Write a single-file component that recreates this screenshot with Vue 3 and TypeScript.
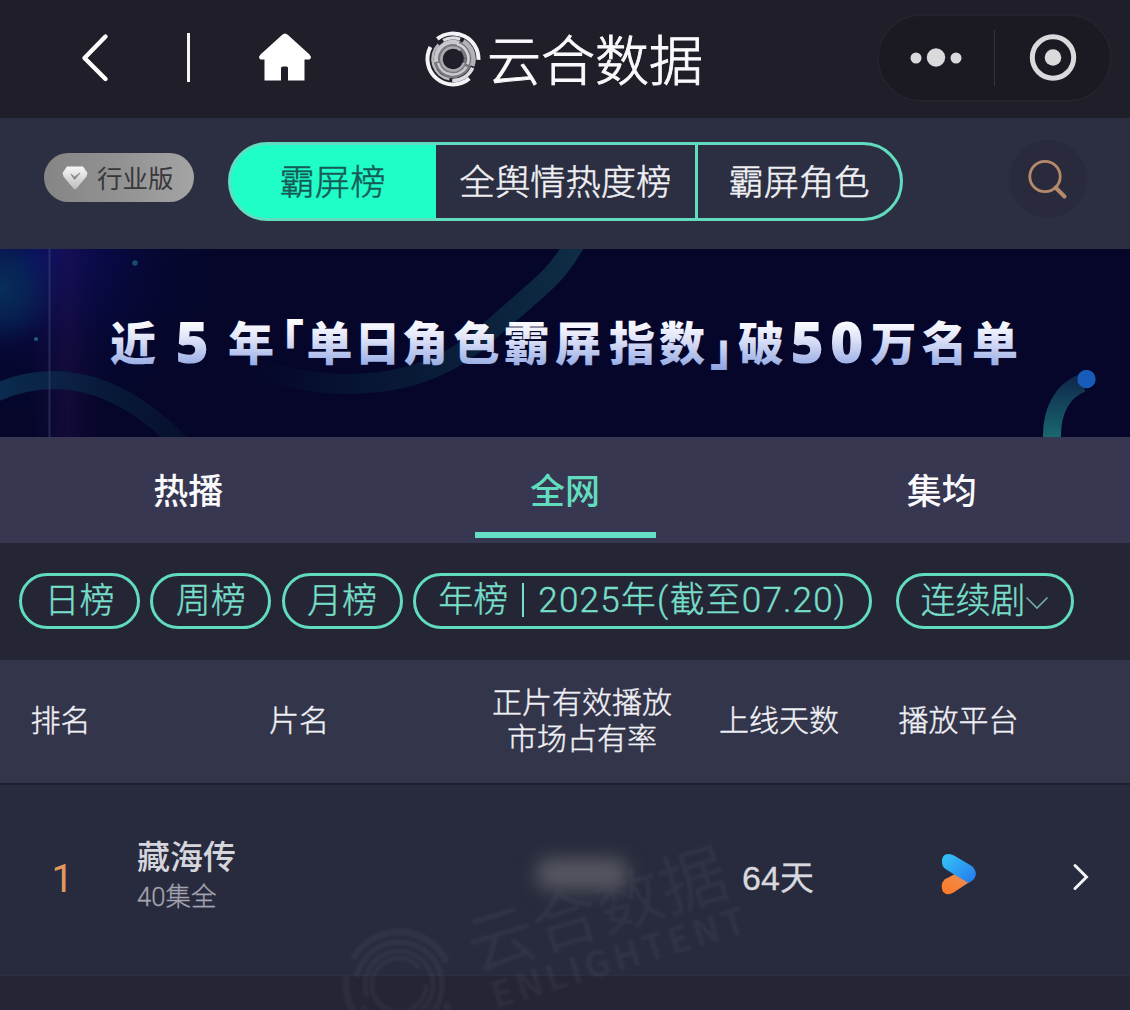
<script setup lang="ts">
interface Arc {
  r: number
  from: number
  to: number
  width: number
  color: string
}

const segments: string[] = ['霸屏榜', '全舆情热度榜', '霸屏角色']
const tabs: string[] = ['热播', '全网', '集均']
const periods: string[] = ['日榜', '周榜', '月榜']

const logoArcs: Arc[] = [
  { r: 15, from: 0, to: 359, width: 8.5, color: '#77777d' },
  { r: 25.5, from: -128, to: 2, width: 4, color: '#f4f4f6' },
  { r: 25.5, from: 50, to: 208, width: 4, color: '#f4f4f6' },
  { r: 21.5, from: 24, to: 92, width: 3.6, color: '#dedee2' },
  { r: 21, from: -118, to: -70, width: 3.2, color: '#dedee2' },
  { r: 20.5, from: 100, to: 225, width: 2.6, color: '#b9b9be' },
  { r: 20.5, from: -60, to: 20, width: 4.6, color: '#b1b1b6' },
  { r: 17, from: 170, to: 290, width: 4, color: '#c9c9cd' },
  { r: 15.5, from: 30, to: 165, width: 2.6, color: '#c8c8cd' },
  { r: 15.5, from: -75, to: 20, width: 2.6, color: '#d4d4d8' },
  { r: 11.5, from: 20, to: 310, width: 2.6, color: '#a9a9af' },
]

const markArcs: Arc[] = [
  { r: 53, from: -150, to: -25, width: 7, color: '#8b8bab' },
  { r: 53, from: 20, to: 190, width: 7, color: '#8b8bab' },
  { r: 43, from: -170, to: 150, width: 6, color: '#8b8bab' },
  { r: 34, from: -200, to: 60, width: 5, color: '#8b8bab' },
  { r: 27, from: 0, to: 320, width: 5, color: '#8b8bab' },
]

function arcPath(a: Arc): string {
  const rad = Math.PI / 180
  const x1 = a.r * Math.cos(a.from * rad)
  const y1 = a.r * Math.sin(a.from * rad)
  const x2 = a.r * Math.cos(a.to * rad)
  const y2 = a.r * Math.sin(a.to * rad)
  const large = a.to - a.from > 180 ? 1 : 0
  return `M${x1.toFixed(2)} ${y1.toFixed(2)}A${a.r} ${a.r} 0 ${large} 1 ${x2.toFixed(2)} ${y2.toFixed(2)}`
}
</script>

<template>
  <div class="page">
    <header class="topbar">
      <svg class="back" width="30" height="50" viewBox="0 0 30 50"><path d="M25.500 4 4.500 25.500 25.500 46.500" fill="none" stroke="#fff" stroke-width="4.400" stroke-linecap="round" stroke-linejoin="round" transform="translate(0 -.5)" /></svg>
      <i class="sep"></i>
      <svg class="home" width="54" height="50" viewBox="0 0 54 50"><path d="M27 1.500Q28.500 1.500 30 3L51.500 22.500Q53.500 24.500 52.500 26.500L51.500 27.500H46.500V48.500H30V36Q30 34.500 28.500 34.500H25Q23 34.500 23 36V48.500H6.500V27.500H2.500L1.500 26.500Q.5 24.500 2.500 22.500L24 3Q25.500 1.500 27 1.500Z" fill="#fff" /></svg>
      <div class="brand">
        <svg width="58" height="58" viewBox="-29 -29 58 58">
          <path v-for="(a, i) in logoArcs" :key="i" :d="arcPath(a)" fill="none" :stroke="a.color" :stroke-width="a.width" />
        </svg>
        <span>云合数据</span>
      </div>
      <div class="capsule">
        <svg class="dots" width="54" height="20" viewBox="0 0 54 20" fill="#dadadd"><circle cx="7" cy="10" r="5.500" /><circle cx="27" cy="9.500" r="9.200" /><circle cx="47" cy="10" r="5.500" /></svg>
        <i></i>
        <svg class="target" width="48" height="48" viewBox="0 0 48 48"><circle cx="24" cy="23.500" r="20.700" fill="none" stroke="#dadadd" stroke-width="5" /><circle cx="24" cy="23.500" r="8.300" fill="#dadadd" /></svg>
      </div>
    </header>

    <div class="subbar">
      <div class="edition">
        <svg width="26" height="24" viewBox="0 0 26 24">
          <defs><linearGradient id="gem" x1="0" y1="0" x2="0" y2="1"><stop offset="0" stop-color="#f8f8f8" /><stop offset="1" stop-color="#bdbdbd" /></linearGradient></defs>
          <path d="M5 .5H21L25.500 7 24.500 10.500 14.500 22.500Q13 24 11.500 22.500L1.500 10.500.5 7Z" fill="url(#gem)" />
          <path d="M9 8 12.500 13.500 18 7 12.500 11Z" fill="#8a8a8a" stroke="#8a8a8a" stroke-width="1" />
        </svg>
        <span>行业版</span>
      </div>
      <nav class="segmented">
        <span v-for="(s, i) in segments" :key="s" :class="{ on: i === 0 }">{{ s }}</span>
      </nav>
      <div class="search">
        <svg width="42" height="42" viewBox="0 0 42 42" fill="none" stroke="#b58a6c"><circle cx="18" cy="18.500" r="15.200" stroke-width="2.800" /><path d="M28.500 29.500 37.500 38.500" stroke-width="4" stroke-linecap="round" /></svg>
      </div>
    </div>

    <section class="banner">
      <svg width="1130" height="188" viewBox="0 0 1130 188">
        <defs>
          <linearGradient id="title" gradientUnits="userSpaceOnUse" x1="0" y1="70" x2="0" y2="120"><stop offset="0" stop-color="#fff" /><stop offset=".35" stop-color="#e4e7f9" /><stop offset="1" stop-color="#8fa5e2" /></linearGradient>
          <radialGradient id="teal" gradientUnits="userSpaceOnUse" cx="0" cy="40" r="60"><stop offset="0" stop-color="#07385f" stop-opacity=".8" /><stop offset=".5" stop-color="#07365f" stop-opacity=".5" /><stop offset="1" stop-color="#07306e" stop-opacity="0" /></radialGradient>
          <radialGradient id="glow" gradientUnits="userSpaceOnUse" cx="50" cy="5" r="180"><stop offset="0" stop-color="#0b1170" stop-opacity=".8" /><stop offset="1" stop-color="#060628" stop-opacity="0" /></radialGradient>
          <linearGradient id="ribbon" gradientUnits="userSpaceOnUse" x1="250" y1="0" x2="580" y2="0"><stop offset="0" stop-color="#0a2440" stop-opacity="0" /><stop offset=".35" stop-color="#09243c" stop-opacity=".5" /><stop offset="1" stop-color="#0f2d45" /></linearGradient>
          <linearGradient id="wave" gradientUnits="userSpaceOnUse" x1="0" y1="0" x2="190" y2="0"><stop offset="0" stop-color="#0a2b50" /><stop offset="1" stop-color="#0a2036" stop-opacity=".35" /></linearGradient>
          <linearGradient id="hook" gradientUnits="userSpaceOnUse" x1="0" y1="130" x2="0" y2="188"><stop offset="0" stop-color="#10294d" /><stop offset="1" stop-color="#18686f" /></linearGradient>
          <linearGradient id="dusk" x1="0" y1="0" x2="1" y2="0"><stop offset="0" stop-color="#2b1250" stop-opacity="0" /><stop offset=".5" stop-color="#2b1250" stop-opacity=".35" /><stop offset="1" stop-color="#1b0a3c" stop-opacity="0" /></linearGradient>
        </defs>
        <rect width="1130" height="188" fill="#05062a" />
        <rect width="300" height="188" fill="url(#glow)" />
        <rect width="80" height="120" fill="url(#teal)" />
        <rect x="30" width="75" height="188" fill="url(#dusk)" />
        <path d="M-5 144C45 122 110 122 180 194" fill="none" stroke="url(#wave)" stroke-width="18" />
        <path d="M250 118C350 150 430 135 485 86S555 30 575 -6" fill="none" stroke="url(#ribbon)" stroke-width="20" />
        <rect x="48.500" width="2" height="188" fill="#33406f" opacity=".6" />
        <circle cx="135" cy="14" r="2.800" fill="#174b70" /><circle cx="36" cy="90" r="2" fill="#245c86" />
        <path d="M1052 190C1051 160 1064 141 1082 134" fill="none" stroke="url(#hook)" stroke-width="18" />
        <circle cx="1086.500" cy="130" r="9.200" fill="#195bb8" />
        <text class="title" fill="url(#title)"><tspan x="110" y="111">近</tspan><tspan x="175.500" y="114" class="num">5</tspan><tspan x="228" y="111">年</tspan><tspan x="258" y="109">「</tspan><tspan x="306.500 354.500 402 453.500 503.500 555 609 659" y="111">单日角色霸屏指数</tspan><tspan x="710" y="116">」</tspan><tspan x="738" y="111">破</tspan><tspan x="790.500 830" y="114" class="num">50</tspan><tspan x="870.500 921.500 972" y="111">万名单</tspan></text>
      </svg>
    </section>

    <nav class="tabs">
      <span v-for="(t, i) in tabs" :key="t" :class="{ active: i === 1 }">{{ t }}</span>
    </nav>

    <div class="filters">
      <span v-for="p in periods" :key="p" class="pill">{{ p }}</span>
      <span class="pill year">年榜<i></i><b>2025年(截至07.20)</b></span>
      <span class="pill kind">连续剧<svg width="24" height="14" viewBox="0 0 24 14"><path d="M1.500 1.500 12 12 22.500 1.500" fill="none" stroke="#74aaa8" stroke-width="1.600" /></svg></span>
    </div>

    <div class="grid head">
      <span>排名</span>
      <span>片名</span>
      <span>正片有效播放<br />市场占有率</span>
      <span>上线天数</span>
      <span>播放平台</span>
      <span></span>
    </div>

    <div class="list">
      <svg class="mark" width="460" height="225" viewBox="0 0 460 225">
        <g transform="translate(79 200)" fill="none">
          <path v-for="(a, i) in markArcs" :key="i" :d="arcPath(a)" :stroke="a.color" :stroke-width="a.width" />
        </g>
        <g transform="translate(156 187) rotate(-17)" fill="#8b8bab">
          <text x="0" y="0" font-size="67">云合数据</text>
          <text x="8" y="41" font-size="36" font-weight="700" textLength="264">ENLIGHTENT</text>
        </g>
      </svg>
      <div class="grid row">
        <span class="rank">1</span>
        <span class="name"><strong>藏海传</strong><small>40集全</small></span>
        <span class="share"><i></i></span>
        <span class="days">64天</span>
        <span>
          <svg class="platform" width="38" height="44" viewBox="0 0 38 44">
            <defs>
              <linearGradient id="blue" x1="0" y1="0" x2="1" y2="1"><stop offset="0" stop-color="#35c6f6" /><stop offset="1" stop-color="#2577ee" /></linearGradient>
              <linearGradient id="orange" x1="0" y1="1" x2="1" y2="0"><stop offset="0" stop-color="#ff7a22" /><stop offset="1" stop-color="#e88f5a" /></linearGradient>
            </defs>
            <path d="M4.500 27.500 17 21 31 29 13.500 40.500Q7 44.500 2.800 39.500 0 32 4.500 27.500Z" fill="url(#orange)" />
            <path d="M2 10Q1.500 5 5.500 2.600 9.500.8 14 3.500L31 13.500Q35.800 17 35.800 22 35.500 27 31 29.500L28.500 31 15 23 5.500 17Q2 15 2 10Z" fill="url(#blue)" />
          </svg>
        </span>
        <svg class="go" width="18" height="30" viewBox="0 0 18 30"><path d="M3 3.500 14.500 15 3 26.500" fill="none" stroke="#f4f4f6" stroke-width="3" stroke-linecap="round" /></svg>
      </div>
    </div>
  </div>
</template>

<style>
body {
  margin: 0;
  background: #242635;
}
</style>

<style scoped>
.page {
  width: 1130px;
  height: 1010px;
  overflow: hidden;
  display: flex;
  flex-direction: column;
  background: #242635;
  color: #ececf1;
  font-family: "Noto Sans CJK SC", sans-serif;
  white-space: nowrap;
}
svg { display: block; flex: none; }

.topbar {
  height: 118px;
  display: flex;
  align-items: center;
  background: #201f29;
  flex: none;
}
.back { margin: 0 0 3px 80px; }
.sep { width: 3px; height: 49px; background: #f5f5f5; margin: 0 0 4px 77px; }
.home { margin: 0 0 4px 68px; }
.brand { display: flex; align-items: center; margin-left: 112px; }
.brand span {
  font-size: 54px;
  line-height: 60px;
  font-weight: 300;
  -webkit-text-stroke: .9px #fafafc;
  color: #fafafc;
  margin: 0 0 2px 5px;
}
.capsule {
  box-sizing: border-box;
  width: 235px;
  height: 88px;
  margin: 0 18px 3px auto;
  border: 2px solid #24232d;
  border-radius: 44px;
  background: #1b1a23;
  display: flex;
  align-items: center;
}
.dots { margin-left: 30px; }
.capsule i { width: 1px; height: 56px; background: #34333c; margin-left: 31px; }
.target { margin-left: 34px; }

.subbar {
  height: 131px;
  display: flex;
  align-items: center;
  background: #2c2f41;
  flex: none;
}
.edition {
  box-sizing: border-box;
  width: 150px;
  height: 49px;
  margin: 0 0 12px 44px;
  padding-left: 18px;
  border-radius: 25px;
  background: linear-gradient(90deg, #858585, #929292 50%, #a4a4a4);
  color: #38383b;
  font-size: 25.500px;
  display: flex;
  align-items: center;
  gap: 9px;
}
.edition span { line-height: 49px; margin-bottom: 3px; }
.segmented {
  box-sizing: border-box;
  width: 675px;
  height: 79px;
  margin: 0 0 4px 34px;
  border: 3px solid #62dcbe;
  border-radius: 40px;
  background: linear-gradient(90deg, #20fec8 205px, transparent 205px);
  background-origin: border-box;
  overflow: hidden;
  display: flex;
  font-size: 35.300px;
  line-height: 69px;
  font-weight: 300;
  -webkit-text-stroke: .5px currentColor;
  text-align: center;
  color: #f0f0f4;
}
.segmented span { width: 259px; border-right: 3px solid #62dcbe; }
.segmented span:last-child { flex: 1; border: 0; }
.segmented .on { width: 203px; padding-right: 2px; border: 0; background: #20fec8; color: #155a56; }
.search {
  width: 78px;
  height: 78px;
  border-radius: 50%;
  background: #292a3b;
  margin: 0 43px 9px auto;
  display: grid;
  place-items: center;
}

.banner { height: 188px; flex: none; }
.title { font-size: 46px; font-weight: 900; }
.num { font-family: "Noto Sans", sans-serif; font-size: 57px; font-weight: 900; }

.tabs {
  height: 106px;
  flex: none;
  display: flex;
  background: #373751;
  font-size: 35px;
  line-height: 104px;
  font-weight: 500;
  color: #fafafc;
}
.tabs span { flex: 1; display: flex; flex-direction: column; align-items: center; height: 106px; }
.tabs .active { color: #62dcbe; }
.tabs .active::after { content: ""; width: 181px; height: 6px; background: #66dec6; margin-top: -9px; flex: none; }

.filters {
  height: 117px;
  flex: none;
  display: flex;
  align-items: center;
  padding: 0 0 0 19px;
  background: #242635;
}
.pill {
  box-sizing: border-box;
  width: 121px;
  height: 56px;
  margin: 0 10.300px 1px 0;
  border: 3px solid #62dcbe;
  border-radius: 28px;
  color: #76dec9;
  font-size: 35px;
  line-height: 50px;
  padding-bottom: 6px;
  font-weight: 300;
  -webkit-text-stroke: .4px currentColor;
  display: flex;
  align-items: center;
  justify-content: center;
}
.year { width: 459px; margin-right: 24px; padding-bottom: 0; font-family: Roboto, "Noto Sans CJK SC", sans-serif; }
.year i { width: 2px; height: 34px; background: #76dec9; margin: 0 14px 2px; }
.year b { font-weight: 300; letter-spacing: 1.200px; }
.kind { width: 178px; margin-right: 0; }
.kind svg { margin-top: 10px; }

.grid {
  display: grid;
  grid-template-columns: 121px 356px 210px 184px 175px 84px;
  align-items: center;
  text-align: center;
}
.head {
  box-sizing: border-box;
  height: 125px;
  padding-bottom: 7px;
  flex: none;
  background: #33354b;
  border-bottom: 2px solid #1f202d;
  font-size: 30px;
  line-height: 36px;
  font-weight: 300;
  -webkit-text-stroke: .4px currentColor;
  color: #f0f0f5;
}
.list { position: relative; flex: 1; overflow: hidden; }
.row { box-sizing: border-box; height: 191px; padding-bottom: 13px; background: #282b3d; border-bottom: 1px solid #2c2e41; }
.rank { font-family: Roboto, sans-serif; font-size: 39px; color: #e2985f; padding: 10px 0 0 4px; }
.name { display: flex; flex-direction: column; align-items: flex-start; padding: 6px 0 0 16px; }
.name strong { font-size: 33px; line-height: 40px; font-weight: 500; color: #d5d5dc; margin-top: -1px; }
.name small { font-family: Roboto, "Noto Sans CJK SC", sans-serif; font-size: 25.600px; line-height: 42px; font-weight: 300; color: #a4a5b0; -webkit-text-stroke: .3px currentColor; margin-top: 1px; }
.share i {
  display: block;
  width: 92px;
  height: 32px;
  margin: 0 auto;
  border-radius: 14px;
  background: #55565f;
  filter: blur(9px);
}
.days { font-family: "Liberation Sans", "Noto Sans CJK SC", sans-serif; font-size: 34px; color: #d8d8df; padding: 3px 2px 0 0; -webkit-text-stroke: .3px currentColor; }
.platform { margin: 0 auto; }
.go { margin: 7px 0 0 26px; }
.mark { position: absolute; left: 320px; top: 0; opacity: .08; filter: blur(1.200px); }
</style>
